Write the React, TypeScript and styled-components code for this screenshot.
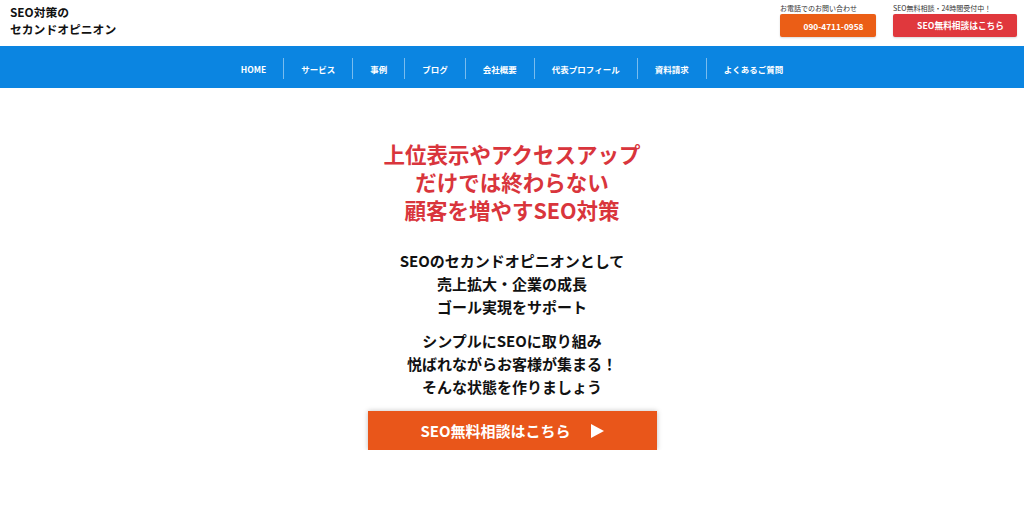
import React from 'react';
import styled, { createGlobalStyle } from 'styled-components';

const GlobalStyle = createGlobalStyle`
  html, body {
    margin: 0;
    padding: 0;
    background: #fff;
  }
  body {
    font-family: "Noto Sans CJK JP", "Noto Sans", sans-serif;
    color: #111;
  }
`;

const Header = styled.header`
  display: flex;
  align-items: flex-start;
  justify-content: space-between;
  height: 46px;
  padding: 0 7px 0 10px;
  box-sizing: border-box;
`;

const Logo = styled.div`
  padding-top: 4px;
  font-size: 11.8px;
  font-weight: 700;
  line-height: 16.5px;
  color: #111;
`;

const Contacts = styled.div`
  display: flex;
  gap: 17px;
  padding-top: 3px;
`;

const ContactBlock = styled.div`
  display: flex;
  flex-direction: column;
`;

const ContactLabel = styled.span`
  font-size: 7px;
  line-height: 10px;
  color: #333;
  white-space: nowrap;
`;

const ContactButton = styled.a<{ $bg: string; $w: number; $size: number }>`
  display: flex;
  align-items: center;
  justify-content: center;
  width: ${p => p.$w}px;
  height: 23px;
  margin-top: 1px;
  padding-left: 11px;
  box-sizing: border-box;
  border-radius: 2px;
  background: ${p => p.$bg};
  color: #fff;
  font-size: ${p => p.$size}px;
  font-weight: 700;
  text-decoration: none;
  box-shadow: 0 1px 2px rgba(0, 0, 0, 0.15);
`;

const Nav = styled.nav`
  display: flex;
  justify-content: center;
  align-items: center;
  height: 42px;
  padding-top: 3px;
  box-sizing: border-box;
  background: #0b85e1;
`;

const NavItem = styled.a`
  display: flex;
  align-items: center;
  height: 21px;
  padding: 0 17px;
  color: #fff;
  font-size: 8.5px;
  font-weight: 700;
  text-decoration: none;
  & + & {
    border-left: 1px solid rgba(255, 255, 255, 0.45);
  }
`;

const Hero = styled.main`
  display: flex;
  flex-direction: column;
  align-items: center;
  padding-top: 52px;
  text-align: center;
`;

const Headline = styled.h1`
  margin: 0;
  color: #d9353c;
  font-size: 21.5px;
  font-weight: 700;
  line-height: 28px;
`;

const Lead = styled.p<{ $top: number }>`
  margin: ${p => p.$top}px 0 0;
  font-size: 15px;
  font-weight: 700;
  line-height: 23px;
  color: #111;
`;

const CtaButton = styled.a`
  display: flex;
  align-items: center;
  justify-content: center;
  gap: 18px;
  width: 289px;
  height: 39px;
  margin-top: 13px;
  background: #e9561a;
  color: #fff;
  font-size: 15px;
  font-weight: 700;
  text-decoration: none;
  box-shadow: 0 0 5px rgba(0, 0, 0, 0.25);
`;

const Arrow = styled.svg`
  width: 13px;
  height: 14px;
  margin-left: 2px;
`;

const navItems = ['HOME', 'サービス', '事例', 'ブログ', '会社概要', '代表プロフィール', '資料請求', 'よくあるご質問'];

export default function App() {
  return (
    <>
      <GlobalStyle />
      <Header>
        <Logo>
          SEO対策の
          <br />
          セカンドオピニオン
        </Logo>
        <Contacts>
          <ContactBlock>
            <ContactLabel>お電話でのお問い合わせ</ContactLabel>
            <ContactButton href="#" $bg="#eb5e16" $w={96} $size={8.3}>
              090-4711-0958
            </ContactButton>
          </ContactBlock>
          <ContactBlock>
            <ContactLabel>SEO無料相談・24時間受付中！</ContactLabel>
            <ContactButton href="#" $bg="#e0383d" $w={124} $size={8.7}>
              SEO無料相談はこちら
            </ContactButton>
          </ContactBlock>
        </Contacts>
      </Header>
      <Nav>
        {navItems.map(item => (
          <NavItem href="#" key={item}>
            {item}
          </NavItem>
        ))}
      </Nav>
      <Hero>
        <Headline>
          上位表示やアクセスアップ
          <br />
          だけでは終わらない
          <br />
          顧客を増やすSEO対策
        </Headline>
        <Lead $top={25}>
          SEOのセカンドオピニオンとして
          <br />
          売上拡大・企業の成長
          <br />
          ゴール実現をサポート
        </Lead>
        <Lead $top={11}>
          シンプルにSEOに取り組み
          <br />
          悦ばれながらお客様が集まる！
          <br />
          そんな状態を作りましょう
        </Lead>
        <CtaButton href="#">
          SEO無料相談はこちら
          <Arrow viewBox="0 0 13 14">
            <path d="M0 0 L13 7 L0 14 Z" fill="#fff" />
          </Arrow>
        </CtaButton>
      </Hero>
    </>
  );
}
